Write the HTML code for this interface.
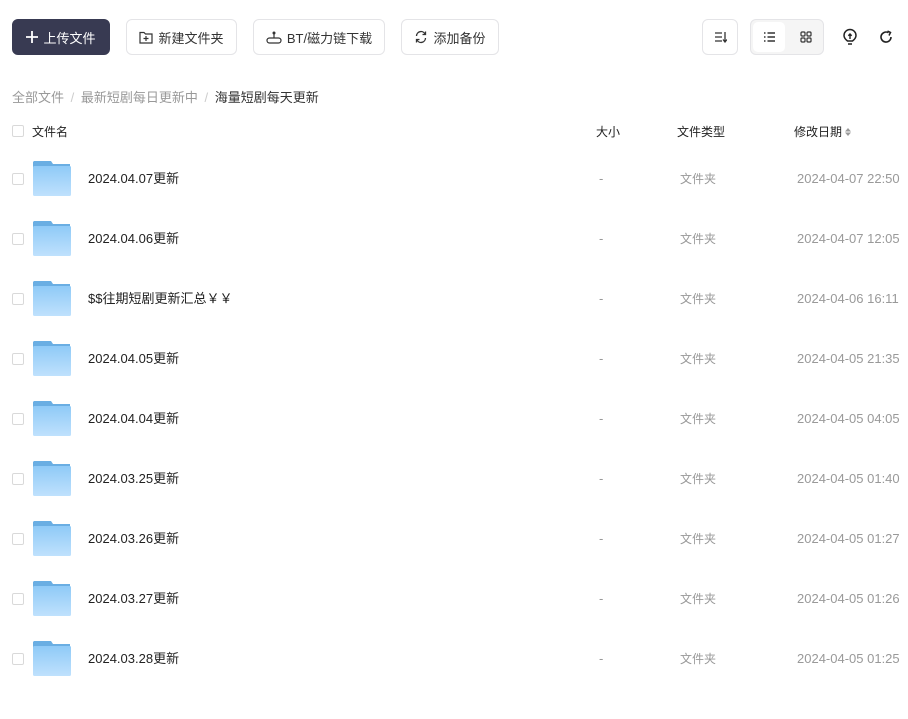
<!DOCTYPE html>
<html><head><meta charset="utf-8"><style>
*{box-sizing:border-box;margin:0;padding:0}
body{width:908px;height:688px;overflow:hidden;background:#fff;font-family:"Liberation Sans","Noto Sans CJK SC",sans-serif;font-size:13px;color:#333;position:relative}
.a{position:absolute}
.btn{position:absolute;top:19px;height:36px;border:1px solid #e4e4e7;border-radius:6px;display:flex;align-items:center;justify-content:center;gap:5px;font-size:13px;color:#333;background:#fff}
.cb{position:absolute;left:12px;width:12px;height:12px;border:1px solid #d9d9d9;border-radius:2px;background:#fff}
.row{position:absolute;left:0;width:908px;height:60px}
.fold{position:absolute;left:33px;top:-18px;width:38px;height:35px}
.row div.t{position:absolute;top:-10px;height:20px;line-height:20px}
.nm{left:88px;font-size:13px;color:#222}
.sz{left:599px;color:#999}
.tp{left:680px;color:#999;font-size:12px}
.dt{left:797px;color:#999;font-size:13px}
</style></head><body>
<div class="btn" style="left:12px;width:98px;background:#383a52;border-color:#383a52;color:#fff;font-size:13px"><svg width="12" height="12" viewBox="0 0 12 12"><path d="M6 0v12M0 6h12" stroke="#fff" stroke-width="1.8"/></svg>上传文件</div>
<div class="btn" style="left:126px;width:111px"><svg width="14" height="13" viewBox="0 0 14 13"><path d="M1 1.5h4l1.5 1.5H13v9H1z" fill="none" stroke="#333" stroke-width="1.2"/><path d="M7 5v5M4.5 7.5h5" stroke="#333" stroke-width="1.2"/></svg>新建文件夹</div>
<div class="btn" style="left:253px;width:132px"><svg width="16" height="13" viewBox="0 0 16 13"><circle cx="8" cy="2" r="1.5" fill="#333"/><path d="M8 3v4" stroke="#333" stroke-width="1.2"/><rect x="1" y="7" width="14" height="5" rx="2.5" fill="none" stroke="#333" stroke-width="1.2"/></svg>BT/磁力链下载</div>
<div class="btn" style="left:401px;width:98px"><svg width="14" height="14" viewBox="0 0 14 14"><path d="M2.5 6A4.5 4.5 0 0 1 11 4M11.5 8A4.5 4.5 0 0 1 3 10" fill="none" stroke="#333" stroke-width="1.3"/><path d="M11.5 1.5v3h-3M2.5 12.5v-3h3" fill="none" stroke="#333" stroke-width="1.3"/></svg>添加备份</div>
<div class="btn" style="left:702px;width:36px"><svg width="13" height="12" viewBox="0 0 13 12"><path d="M1 2h7M1 6h7M1 10h7M11 1v10M9 8.5l2 2.5 2-2.5" fill="none" stroke="#333" stroke-width="1.3"/></svg></div>
<div class="btn" style="left:750px;width:74px;background:#f5f5f5;justify-content:flex-start;padding:2px"><div style="width:36px;height:30px;background:#fff;border-radius:5px;display:flex;align-items:center;justify-content:center"><svg width="13" height="10" viewBox="0 0 13 10"><path d="M1 1h1.5M1 5h1.5M1 9h1.5M4.5 1H12M4.5 5H12M4.5 9H12" stroke="#333" stroke-width="1.4"/></svg></div><div style="width:34px;display:flex;justify-content:center"><svg width="12" height="12" viewBox="0 0 12 12"><rect x="1" y="1" width="4" height="4" rx="1" fill="none" stroke="#333" stroke-width="1.2"/><rect x="7" y="1" width="4" height="4" rx="1" fill="none" stroke="#333" stroke-width="1.2"/><rect x="1" y="7" width="4" height="4" rx="1" fill="none" stroke="#333" stroke-width="1.2"/><rect x="7" y="7" width="4" height="4" rx="1" fill="none" stroke="#333" stroke-width="1.2"/></svg></div></div>
<svg class="a" style="left:842px;top:28px" width="16" height="18" viewBox="0 0 16 18"><path d="M5.5 13C3.5 11.5 2 10 2 7.5a6 6 0 0 1 12 0c0 2.5-1.5 4-3.5 5.5z" fill="none" stroke="#222" stroke-width="1.5"/><path d="M6 16h4M8 6v5M6.3 7.7L8 6l1.7 1.7" fill="none" stroke="#222" stroke-width="1.4"/></svg>
<svg class="a" style="left:879px;top:30px" width="14" height="14" viewBox="0 0 14 14"><path d="M12 7A5 5 0 1 1 9.5 2.7" fill="none" stroke="#222" stroke-width="1.6"/><path d="M8.5 1l3 1.5-1.5 3" fill="none" stroke="#222" stroke-width="1.5"/></svg>
<div class="a" style="left:12px;top:87px;font-size:13px;color:#999">全部文件 <span style="color:#ccc;margin:0 3px">/</span> 最新短剧每日更新中 <span style="color:#ccc;margin:0 3px">/</span> <span style="color:#333">海量短剧每天更新</span></div>
<div class="cb" style="top:125px"></div>
<div class="a" style="left:32px;top:123px;font-size:12px;color:#222">文件名</div>
<div class="a" style="left:596px;top:123px;font-size:12px;color:#222">大小</div>
<div class="a" style="left:677px;top:123px;font-size:12px;color:#222">文件类型</div>
<div class="a" style="left:794px;top:123px;font-size:12px;color:#222">修改日期 <svg width="6" height="10" viewBox="0 0 6 10" style="vertical-align:-1px"><path d="M3 1L6 4.5H0zM3 9L0 5.5h6z" fill="#999"/></svg></div>
<div id="rows"></div>
<script>
var d=[["2024.04.07更新","2024-04-07 22:50"],["2024.04.06更新","2024-04-07 12:05"],["$$往期短剧更新汇总￥￥","2024-04-06 16:11"],["2024.04.05更新","2024-04-05 21:35"],["2024.04.04更新","2024-04-05 04:05"],["2024.03.25更新","2024-04-05 01:40"],["2024.03.26更新","2024-04-05 01:27"],["2024.03.27更新","2024-04-05 01:26"],["2024.03.28更新","2024-04-05 01:25"]];
var h="";d.forEach(function(r,i){var y=179+i*60;h+='<div class="row" style="top:'+y+'px"><div class="cb" style="top:-6px"></div><svg class="fold" viewBox="0 0 38 35"><defs><linearGradient id="g'+i+'" x1="0" y1="0" x2="0" y2="1"><stop offset="0" stop-color="#8fcaf7"/><stop offset="1" stop-color="#bfe1fd"/></linearGradient></defs><path d="M1 0h17l2 3h17v5H0V1z" fill="#6aaee3"/><rect x="0" y="5" width="38" height="30" rx="1.5" fill="url(#g'+i+')"/></svg><div class="t nm">'+r[0]+'</div><div class="t sz">-</div><div class="t tp">文件夹</div><div class="t dt">'+r[1]+'</div></div>';});
document.getElementById("rows").innerHTML=h;
</script>
</body></html>
